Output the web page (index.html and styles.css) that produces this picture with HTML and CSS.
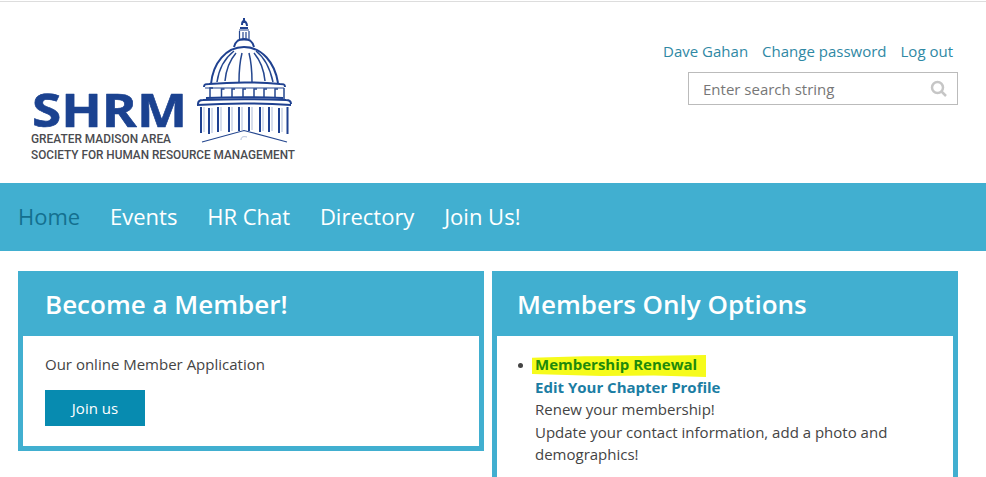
FILE: index.html
```html
<!DOCTYPE html>
<html lang="en">
<head>
<meta charset="utf-8">
<title>SHRM Greater Madison Area</title>
<link rel="stylesheet" href="styles.css">
</head>
<body>
<header class="top">
  <svg class="logo" width="275" height="150" viewBox="25 15 275 150" role="img" aria-label="SHRM logo">
    <text class="shrm" x="32" y="126.500" textLength="155" lengthAdjust="spacingAndGlyphs">SHRM</text>
    <text class="tag" x="31" y="143" textLength="140" lengthAdjust="spacingAndGlyphs">GREATER MADISON AREA</text>
    <text class="tag" x="31" y="158.500" textLength="264" lengthAdjust="spacingAndGlyphs">SOCIETY FOR HUMAN RESOURCE MANAGEMENT</text>
    <g class="dome">
      <path class="thick" d="M244 18v5M242 25c0-3 1-4 2-4s3 2 3 5M240 28h8"/>
      <path d="M239 30h10M239.500 31v8M243 32v7M246 32v7M249 31v8M237.500 40h13"/>
      <path class="thick" d="M234 47c1-5 5-8 10-8s9 3 10 8"/>
      <path class="thick" d="M211 84c2-21 15-37 33-37s31 16 34 36"/>
      <path class="mid" d="M217 82c2-14 8-24 17-31M225 81c1-11 5-21 11-28M239 82c0-11 1-21 3-29M252 82c0-11-1-21-3-29M265 81c-1-11-5-21-11-28M273 82c-3-14-8-24-17-31"/>
      <path class="thick" d="M204 87c0-3 2-3 5-3c23-2 48-2 71 0c3 0 5 0 5 3"/>
      <path d="M205 88h79"/>
      <path class="mid" d="M210 98v-10h3M221.500 98v-9h3M232 98v-9h3M243 98v-9h3M254 98v-9h3M264 98v-9h3M275 98v-9h3M284 88v11"/>
      <path class="thick" d="M206 98c25-1 52-1 77 0"/>
      <path class="thick" d="M198 104c0-3 2-4 5-4c28-1 55-1 83 0c3 0 5 1 5 4"/>
      <path class="thick" d="M197 105c31-2 63-2 94 0"/>
      <path class="thick" d="M201 107v26M209 108v26M218 107v25M229 107v25M239 107v24M249 107v24M260 107v25M269 107v25M279 108v25M287.500 107v27"/>
      <path class="thin" d="M204 107v25M212 108v25M221 107v24M232 107v24M242 107v23M252 107v23M263 107v24M272 107v24M282 108v24"/>
      <path d="M202 142l42-11.500l43 11.500"/>
      <path class="thin" d="M241 140c0-3 2-4 6-3"/>
    </g>
  </svg>
  <div class="account">
    <nav class="user-links">
      <a href="#">Dave Gahan</a>
      <a href="#">Change password</a>
      <a href="#">Log out</a>
    </nav>
    <form class="search">
      <input class="search-input" type="text" placeholder="Enter search string">
      <svg class="search-icon" width="18" height="18" viewBox="0 0 18 18" aria-hidden="true">
        <circle cx="7.500" cy="7.500" r="5.500"/>
        <path d="M11.500 11.500l4.500 4.500"/>
      </svg>
    </form>
  </div>
</header>
<nav class="main-nav">
  <a class="current" href="#">Home</a>
  <a href="#">Events</a>
  <a href="#">HR Chat</a>
  <a href="#">Directory</a>
  <a href="#">Join Us!</a>
</nav>
<main class="cards">
  <section class="card">
    <h2 class="card-title">Become a Member!</h2>
    <div class="card-body">
      <p class="intro">Our online Member Application</p>
      <a class="button" href="#">Join us</a>
    </div>
  </section>
  <section class="card card-tall">
    <h2 class="card-title">Members Only Options</h2>
    <div class="card-body">
      <ul class="options">
        <li>
          <a class="option marked" href="#">Membership Renewal</a>
          <a class="option" href="#">Edit Your Chapter Profile</a>
          <span class="line">Renew your membership!</span>
          <span class="line">Update your contact information, add a photo and demographics!</span>
        </li>
      </ul>
    </div>
  </section>
</main>
</body>
</html>
```
FILE: styles.css
```css
* { box-sizing: border-box; }
html { height: 477px; overflow: hidden; }
body {
  margin: 1px 0 0;
  height: 476px;
  overflow: hidden;
  background: #fff;
  color: #444;
  font-family: "Open Sans", "Liberation Sans", sans-serif;
  font-size: 15px;
  border-top: 1px solid #ddd;
}
a { text-decoration: none; }

.top {
  height: 181px;
  display: flex;
  justify-content: space-between;
  align-items: flex-start;
  padding: 13px 28px 0 25px;
}
.logo { display: block; }
.shrm {
  font-family: "Open Sans", sans-serif;
  font-weight: 700;
  font-size: 46px;
  fill: #1b4290;
  stroke: #1b4290;
  stroke-width: .6px;
  stroke-linejoin: round;
}
.tag {
  font-family: "Roboto", sans-serif;
  font-weight: 500;
  font-size: 12.500px;
  fill: #4a4b4f;
}
.dome path { fill: none; stroke: #25478f; stroke-width: 1.200px; }
.dome .thick { stroke-width: 2px; stroke: #1f4190; }
.dome .mid { stroke-width: 1.500px; }
.dome .thin { stroke-width: .7px; stroke: #8ea2c9; }

.account {
  display: flex;
  flex-direction: column;
  align-items: flex-end;
  padding-top: 25px;
}
.user-links {
  display: flex;
  gap: 14px;
  padding-right: 5px;
  line-height: 22px;
}
.user-links a { color: #2f88a4; }
.search { position: relative; margin-top: 10px; }
.search-input {
  display: block;
  width: 270px;
  height: 33px;
  border: 1px solid #bbb;
  padding: 0 40px 0 14px;
  font: inherit;
  color: #777;
  background: #fff;
  outline: 0;
  border-radius: 0;
}
.search-input::placeholder { color: #777; opacity: 1; }
.search-icon {
  position: absolute;
  right: 10px;
  top: 8px;
  fill: none;
  stroke: #c6c6c6;
  stroke-width: 2.500px;
}

.main-nav {
  height: 68px;
  background: #41afd0;
  display: flex;
  align-items: center;
  gap: 29.800px;
  padding: 0 0 2px 18px;
  font-size: 22px;
}
.main-nav a { color: #fff; }
.main-nav .current { color: #14708f; }

.cards {
  display: flex;
  align-items: flex-start;
  gap: 8px;
  padding: 20px 28px 0 18px;
}
.card {
  width: 466px;
  border: 5px solid #41afd0;
  border-top: 0;
  background: #fff;
}
.card-tall { height: 206px; border-bottom: 0; }
.card-title {
  margin: 0 -5px;
  height: 65px;
  background: #41afd0;
  color: #fff;
  font-size: 26px;
  font-weight: 600;
  line-height: 67px;
  padding-left: 27px;
}
.card-tall .card-title { padding-left: 25px; }
.card-body { padding: 17px 22px 20px; }
.intro { margin: 0 0 15px; line-height: 22px; }
.button {
  display: block;
  width: 100px;
  height: 36px;
  background: #078bb0;
  color: #fff;
  text-align: center;
  line-height: 36px;
}
.options { margin: 0; padding: 0 0 0 16px; line-height: 22.500px; }
.option { display: block; color: #1b7da3; font-weight: 700; }
.line { display: block; }
.marked { position: relative; color: #1f8a0a; z-index: 0; }
.marked::before {
  content: "";
  position: absolute;
  z-index: -1;
  left: -3px;
  top: 2px;
  width: 174px;
  height: 22px;
  background: #f6fb1c;
  clip-path: polygon(0 12%, 30% 6%, 62% 4%, 100% 0, 100% 100%, 70% 93%, 40% 96%, 0 86%);
}
```
